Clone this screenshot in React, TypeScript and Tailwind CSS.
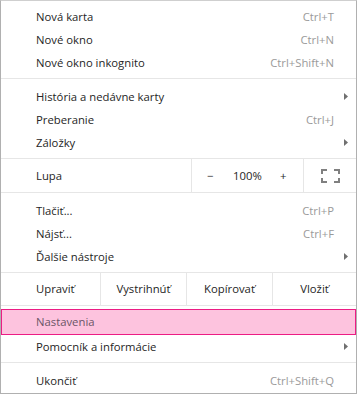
import React from "react";

function Arrow() {
  return (
    <svg width="4" height="7" viewBox="0 0 4 7" className="block">
      <path d="M0 0 L4 3.5 L0 7 Z" fill="#707070" />
    </svg>
  );
}

function Row({
  label,
  shortcut,
  sub,
}: {
  label: string;
  shortcut?: string;
  sub?: boolean;
}) {
  return (
    <div className="flex h-[23px] items-center pl-[35px]">
      <span className="flex-1">{label}</span>
      {shortcut && <span className="pr-[22px] text-[#9a9a9a]">{shortcut}</span>}
      {sub && (
        <span className="pr-[8px]">
          <Arrow />
        </span>
      )}
    </div>
  );
}

function Sep() {
  return <div className="mt-[4px] mb-[6px] h-px bg-[#e6e6e6]" />;
}

function FullscreenIcon() {
  return (
    <svg width="19" height="14" viewBox="0 0 19 14" fill="none" stroke="#808080" strokeWidth="2">
      <path d="M1 5V1H6M13 1H18V5M18 9V13H13M6 13H1V9" />
    </svg>
  );
}

export default function App() {
  return (
    <div className="h-[394px] w-[357px] border border-[#b0b0b0] border-t-[#cfcfcf] bg-white pt-1 font-['Open_Sans','Noto_Sans',sans-serif] text-[11.3px] leading-none text-[#252525]">
      <Row label="Nová karta" shortcut="Ctrl+T" />
      <Row label="Nové okno" shortcut="Ctrl+N" />
      <Row label="Nové okno inkognito" shortcut="Ctrl+Shift+N" />
      <Sep />
      <Row label="História a nedávne karty" sub />
      <Row label="Preberanie" shortcut="Ctrl+J" />
      <Row label="Záložky" sub />
      <div className="mt-[4px] h-px bg-[#e6e6e6]" />
      <div className="flex h-[33px] items-stretch">
        <span className="flex flex-1 items-center pl-[35px]">Lupa</span>
        <div className="flex w-[112px] items-center border-l border-[#e6e6e6] pl-[15px]">
          <span className="w-[26px] text-[#333]">−</span>
          <span className="w-[47px]">100%</span>
          <span>+</span>
        </div>
        <div className="flex w-[53px] items-center justify-center border-l border-[#e6e6e6]">
          <FullscreenIcon />
        </div>
      </div>
      <div className="mb-[6px] h-px bg-[#e6e6e6]" />
      <Row label="Tlačiť..." shortcut="Ctrl+P" />
      <Row label="Nájsť..." shortcut="Ctrl+F" />
      <Row label="Ďalšie nástroje" sub />
      <div className="mt-[4px] h-px bg-[#e6e6e6]" />
      <div className="flex h-[32px] items-stretch">
        <span className="flex w-[99px] items-center pl-[35px]">Upraviť</span>
        <span className="flex w-[86px] items-center justify-center border-l border-[#e6e6e6]">Vystrihnúť</span>
        <span className="flex w-[86px] items-center justify-center border-l border-[#e6e6e6]">Kopírovať</span>
        <span className="flex flex-1 items-center justify-center border-l border-[#e6e6e6]">Vložiť</span>
      </div>
      <div className="h-px bg-[#e6e6e6]" />
      <div className="mt-[3px] flex h-[26px] items-center border border-[#ec1c84] bg-[#fdc3de] pl-[34px] text-[#6a5566]">
        Nastavenia
      </div>
      <Row label="Pomocník a informácie" sub />
      <Sep />
      <Row label="Ukončiť" shortcut="Ctrl+Shift+Q" />
    </div>
  );
}
